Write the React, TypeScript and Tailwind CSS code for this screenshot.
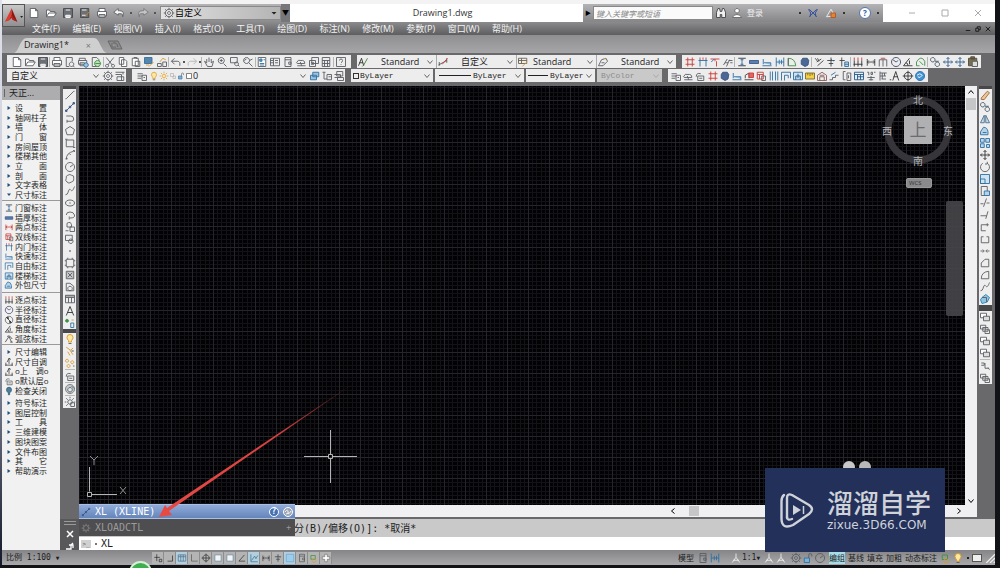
import React, { useState } from "react";

type Part = [string, string, string?];
const K = "#5a5d62";
const B = "#2f6fa3";
const R = "#cc3b36";
const Y = "#d99a2b";
const G = "#3f9142";

const icons: Record<string, Part[]> = {
  new: [[K, "M3 2h7l3 3v9H3zM10 2v3h3", "#fff"]],
  open: [[K, "M2 13V4h4l1 2h6v2M2 13l3-5h10l-3 5z", "#fff"]],
  save: [["#44474c", "M2 2h12v12H2z", "#6c6f74"], ["#fff", "M5 4h6M5 11h6v3H5z", "#ddd"]],
  saveas: [["#44474c", "M2 2h11v12H2z", "#6c6f74"], ["#fff", "M4 4h6M4 11h5"], ["#d97f2b", "M14 6l-6 7", "none"]],
  print: [[K, "M4 6V2h8v4M2 6h12v6H2zM4 10h8v4H4z", "#fff"]],
  preview: [[K, "M3 2h8v5M3 2v12h4M10 8a3 3 0 1 0 .1 0M12 13l2 2"]],
  publish: [[K, "M3 6V3h8v3M2 6h11v5H2zM4 9h6v4H4z"], [B, "M12 9a3 3 0 1 0 .1 0", "#9cc7e0"]],
  globe: [[K, "M3 2h6l3 3v9H3z"], [G, "M10 6a4 4 0 1 0 .1 0M7 10h7", "#bfe0b8"]],
  cut: [[K, "M3 2l8 10M13 2L5 12M4 11a2 2 0 1 0 .1 0M12 11a2 2 0 1 0 .1 0"]],
  copy: [[K, "M3 2h6v9H3zM6 5h5l2 2v7H6z", "#fff"]],
  paste: [[K, "M3 3h8v10H3zM5 2h4v2M7 7h6v7H7z", "#fff"]],
  match: [[B, "M2 2h10v8H2z", "#5b84ab"], [Y, "M14 8l-6 6M4 12h4", "none"]],
  block: [[K, "M2 10h5v4H2zM9 8h5v6H9z"], [Y, "M5 8l4-5 4 2", "none"]],
  undo: [["#55585e", "M6 3L2 7l4 4M2 7h8q4 0 3 6"]],
  redo: [["#b5b6b8", "M10 3l4 4-4 4M14 7H6q-4 0-3 6"]],
  undow: [["#5f6165", "M7 2L1 7l6 4V9h4q2 0 2 4 3-8-4-8H7z", "#f4f4f4"]],
  redow: [["#77797c", "M9 2l6 5-6 4V9H5q-2 0-2 4-3-8 4-8h2z", "#c4c4c6"]],
  pan: [[K, "M5 9V4M8 8V2M11 9V4M5 9L2 7l4 7h6l2-7-3 2"]],
  zoom: [[K, "M7 2a4 4 0 1 0 .1 0M10 10l4 4M5 6h4M7 4v4"]],
  zoomw: [[K, "M2 2h9v7H2zM10 8a2.500 2.500 0 1 0 .1 0M12 12l2 2"]],
  zoomp: [[K, "M6 2a4 4 0 1 0 .1 0M9 9l5 5M3 6l3-2M14 4l-4 2"]],
  props: [[K, "M3 2h10v12H3z", "#fff"], [B, "M5 4h3v3H5zM10 5h2M5 10h6M5 12h6", "#6da0c8"]],
  palette: [[K, "M2 3h12v10H2zM6 3v10M8 6h4M8 9h4M2 6h4M2 9h4"]],
  sheet: [[K, "M4 2h8v12H4zM4 5h8M9 8h3v3H9z"]],
  markup: [[K, "M2 9q2-5 6-3 5-1 5 4H3zM3 13h11M7 8l2 5"]],
  sheets: [[K, "M5 2h9v8H5zM2 6h8v8H2zM4 9h4M4 11h4"]],
  calc: [[K, "M3 2h10v12H3zM3 6h10M6 6v8M10 6v8M3 10h10"]],
  help: [[K, "M2 2h12v12H2zM6 6q0-2 2-2t2 2-2 3M8 11v1"]],
  gear: [[K, "M8 3a5 5 0 1 0 .1 0M8 6a2 2 0 1 0 .1 0M8 1v2M8 13v2M1 8h2M13 8h2M3 3l2 2M11 11l2 2M13 3l-2 2M3 13l2-2"]],
  wsave: [[K, "M2 3h12M2 6h8v8M4 9h9v5H4zM12 3v3"]],
  layers: [[K, "M2 5h7M2 8h7M2 11h5M8 7h6v7H8zM10 10h2"]],
  bulb: [[Y, "M8 2q4 0 4 4 0 2-2 4v2H6v-2Q4 8 4 6q0-4 4-4z", "#ffe9a0"], [K, "M6 14h4"]],
  sun: [[Y, "M8 5a3 3 0 1 0 .1 0M8 1v2M8 13v2M1 8h2M13 8h2M3 3l2 2M11 11l2 2M13 3l-2 2M3 13l2-2", "#ffeab0"]],
  sung: [[K, "M8 5a3 3 0 1 0 .1 0M8 1v2M1 8h2M13 8h2M3 3l2 2M13 3l-2 2M3 13l2-2M9 9h5v5H9z", "#eee"]],
  sphere: [["#777", "M8 2a6 6 0 1 0 .1 0", "#c9c9c9"], ["#4d6673", "M8 6a3 3 0 1 0 .1 0M10 4l3 3", "#e9e9e9"]],
  vp: [["#a7a7a7", "M3 3h6v6H3zM8 8h5v5H8z"]],
  lock: [[B, "M3 8h7v6H3z", "#7fb0d6"], [K, "M9 8V4q0-2 2-2t2 2v2", "none"]],
  box: [["#333", "M3 3h10v10H3z", "#fff"]],
  lay1: [[B, "M5 3h8v6H5zM2 7h8v6H2z", "#9fc4de"]],
  lay2: [[K, "M2 3h4M4 3v9h4M8 6h6v7H8zM10 9h3"]],
  lay3: [[K, "M5 2h8v6H5zM2 6h8v4H2M6 10h8v4H6z"]],
  textA: [["#333", "M2 13L6 3l3 10M3 9h5"], ["#4a7a3a", "M14 3l-5 9-2 2", "none"]],
  dim: [["#555", "M2 12L13 6M3 8v5M13 3v6"], [R, "M7 11l7-8", "none"]],
  tstyle: [["#6b6250", "M2 3h11v7H2zM2 6h11M6 3v7", "#eee"], [Y, "M13 8l-6 6", "none"]],
  leader: [[K, "M2 13l4-8 6-2 2 4-6 6zM6 9h4"], [Y, "M9 3l3 1", "none"]],
  grid: [[R, "M5 2v12M11 2v12M2 5h12M2 11h12"]],
  gridb: [[B, "M4 4v10M12 4v10M2 6h12"], [R, "M4 2v2M12 2v2M8 2v3"]],
  gridr: [[R, "M2 4h12M8 4v3M10 7v7"], [B, "M3 8l4-4"]],
  branch: [[K, "M2 12l5-8M6 14l4-9M9 6h5M11 9h3M4 9h4"]],
  ibeam: [["#333", "M3 3h10M3 13h10"], [B, "M8 4v8M6 5h4M6 11h4", "#2f6fa3"]],
  wall: [["#3a588a", "M2 6h12v4H2z", "#5b7fb0"]],
  stair: [[B, "M2 13h12M3 11V4M4 9h9v3", "#a7c8de"]],
  winh: [[B, "M3 2v12M13 2v12M3 8h10M7 5v6M10 5v6"]],
  door: [[G, "M3 13V3q9 0 10 10z", "none"], [K, "M3 3v10"]],
  blob: [["#36527e", "M5 3h6l2 3-1 6-4 2-5-3V6z", "#4a6796"]],
  pen: [["#444", "M3 3l3 4M6 3l2 4M5 8l6-4M6 13l8-7"]],
  cross: [["#444", "M8 2v12M3 6h10M5 10h6"], [B, "M8 4l3 3"]],
  crossb: [["#444", "M5 2v12M2 6h7"], [B, "M9 8h5v6H9zM9 11h5", "#c3d8e8"]],
  d3: [[R, "M3 2v4M8 2v4M13 2v4"], ["#333", "M3 6v8M8 6v8M13 6v8M2 11h12"]],
  d2: [["#444", "M3 4v9M13 4v9M3 8h10M5 6l-2 2 2 2M11 6l2 2-2 2"]],
  d2r: [[R, "M3 4v9M13 4v9M3 8h10M5 6l-2 2 2 2M11 6l2 2-2 2"]],
  dd: [[K, "M3 5v9M8 5v9M13 5v9M3 5h10"], [R, "M5 3h6"]],
  clock: [["#446", "M8 2a6 6 0 1 0 .1 0M8 8L4 5"], [B, "M8 8l3-2"]],
  diam: [[K, "M8 2a6 6 0 1 0 .1 0M4 4l8 8"], ["#333", "M4 4h3v3zM12 12H9V9z", "#333"]],
  angle: [["#333", "M2 13h12M2 13L10 3M8 13q0-4-3-4M10 6v5"]],
  arc: [["#333", "M2 13l6-9 4 9M10 13h4"], ["#333", "M5 4q4-3 8 4"]],
  green: [[G, "M2 13V8q6-10 11-1v6M6 7l5 5M2 13h4"]],
  copyo: [["#456", "M5 2a3 3 0 1 0 .1 0M8 7h5M11 8a3 3 0 1 0 .1 0"]],
  move: [["#355d8c", "M8 2v12M2 8h12M6 4l2-2 2 2M6 12l2 2 2-2M4 6L2 8l2 2M12 6l2 2-2 2"]],
  movek: [["#333", "M8 2v12M2 8h12M6 4l2-2 2 2M6 12l2 2 2-2M4 6L2 8l2 2M12 6l2 2-2 2"]],
  pasted: [["#554b38", "M2 3h11v10H2zM5 1h5v3H5z", "#777055"], ["#555", "M7 7h7v7H7z", "#ddd"]],
  red1: [["#444", "M2 13h12M3 11V7l5-3v7"], [R, "M8 4h6v6H8z", "#d66"]],
  red2: [[R, "M3 3h8v9H3zM3 6h8M6 6v6"], [K, "M9 8h5v6H9z"]],
  cols: [[B, "M3 2v12M6 2v12M10 2v12M13 2v12"]],
  arch: [[B, "M2 14V3h12v8M6 14V7h5v4"]],
  win: [[B, "M2 3h12v10H2z", "#cfe3f0"], ["#245a8c", "M5 13V8h6v5M8 5v6"]],
  ruler: [["#7a6a20", "M2 4h12v8H2zM5 4v3M8 4v4M11 4v3", "#f2cf46"]],
  house: [["#8a5c55", "M2 14V7l6-4 6 4v7zM5 14v-5h6v5M5 7h6"]],
  steps: [[K, "M2 13h4v-3h4V7h4"], [B, "M4 7l6-4"]],
  tsteps: [["#333", "M2 13h12M3 9v5M13 9v5M8 2v9M5 8l3-6 3 2"]],
  brace: [[K, "M6 2H3v11h3M8 4h5v10H8zM10 7v4"]],
  table: [["#245a8c", "M2 3h12v10H2zM2 6h12M6 6v7M10 6v7M6 9h8"]],
  tableg: [[K, "M2 3h12v10H2zM2 4h12M2 6h12M6 6v7M10 6v7"]],
  num: [[K, "M3 3h2v4M8 3h2v3H8zM12 3h2M3 10h10M5 13h6M8 8v6"]],
  tree: [[K, "M4 2v12M4 4h9M4 8h8M7 4v8M10 4v4M6 12h6"]],
  alpha: [["#333", "M5 14l4-12 4 12M6 9h6M1 13h2"]],
  target: [["#333", "M8 3a5 5 0 1 0 .1 0M8 1v14M1 8h14"]],
  swirl: [["#2b6fb4", "M8 2a6 6 0 1 0 .1 0", "#3f93d0"], ["#fff", "M4 7q4-4 7 0-3 5-6 2"]],
  line: [[K, "M3 13L13 3"], [K, "M2 13h1M13 3h1"]],
  xline: [["#35507c", "M3 13L13 3M2 12h2v2H2zM7 7h2v2H7zM12 2h2v2h-2z"]],
  pline: [[K, "M3 4h6q4 0 4 4 0 3-3 3H4M4 9v4"]],
  poly: [[K, "M8 2l6 4-2 7H4L2 6z"]],
  rect: [[K, "M3 4h10v9H3zM1.500 3h3M12 14h3"]],
  arcd: [[K, "M3 14Q3 5 13 3M2 13h3M7 6l2 2M12 2h2v2"]],
  circle: [[K, "M8 2a6 6 0 1 0 .1 0M8 8l4-3"]],
  cloud: [[K, "M5 3q3-2 5 0 4 0 3 4 1 4-3 5-4 3-6 0-3-2-1-5-1-3 2-4z"]],
  spline: [[K, "M2 13c4 0 3-5 5-7s3 7 7-4"]],
  ellipse: [[K, "M8 4c4 0 6 2 6 4s-2 4-6 4-6-2-6-4 2-4 6-4M7 8h2"]],
  earc: [[K, "M3 8q0-4 5-4t6 4-6 4M7 10v4"]],
  insert: [[K, "M4 3q5-3 6 2v3H4zM8 8h6v6H8zM2 13h4"]],
  mkblock: [[K, "M2 3h9v7H2zM9 8a3 3 0 1 0 .1 0"]],
  point: [[K, "M8 7v2M7 8h2"]],
  hatch: [[K, "M3 3h10v10H3zM1 5h2M1 11h2M13 5h2M13 11h2M5 1v2M11 1v2M5 13v2M11 13v2"]],
  grad: [[K, "M3 3h10v10H3z", "#c8c8c8"], [K, "M5 5l6 6M11 5l-6 6"]],
  region: [[K, "M3 3h5l5 4v6H3zM8 7a3 3 0 1 0 .1 0"]],
  mtext: [["#333", "M3 14L8 2l5 12M5 10h6"]],
  addsel: [[B, "M9 8h4v6H9z"], [G, "M4 3a2 2 0 1 0 .1 0", G], [Y, "M10 4h3"]],
  broom: [[Y, "M3 3l6 4 3-3M8 7l4 6M5 9l3 5"], ["#345", "M10 8h3"]],
  dots: [[Y, "M4 3a2 2 0 1 0 .1 0M11 5a2 2 0 1 0 .1 0M6 10a2 2 0 1 0 .1 0"], [K, "M12 12h2"]],
  stamp: [[K, "M3 9q0-6 6-4M5 8h8v6H5zM7 11h4"]],
  erase: [["#a06a3c", "M3 12L11 3l3 2-7 9H3z", "#e8c79a"]],
  mirror: [["#4c6e8c", "M7 3v10H2zM9 3v10h5z", "#cfe0ec"]],
  offset: [[B, "M2 13V9l4-6q5 0 6 6v4zM5 10h5", "#b6d3e5"]],
  array: [[B, "M2 2h5v5H2zM9 2h5v5H9zM2 9h5v5H2zM10 10h4v4h-4z", "#bcd8ea"]],
  rotate: [[K, "M11 3a6 6 0 1 1-6 0M11 1v3h-3"]],
  scale: [[B, "M2 2h12v12H2zM2 8h6v6H2z", "#cfe3f0"]],
  stretch: [[K, "M3 2h8v12H3z"], [B, "M7 8h7v6H7z", "#b6d3e5"]],
  trim: [[K, "M2 9h4M10 8h4M6 13l4-11"]],
  extend: [[K, "M2 9h8M12 3l-3 10"]],
  brk: [[K, "M3 13V5h10M11 3v4M3 13h6"]],
  brk2: [[K, "M3 13V5h3M10 5h3v8H3"]],
  join: [[K, "M2 8h4M10 8h4M5 6l2 2-2 2M11 6L9 8l2 2"]],
  chamfer: [[K, "M3 13V8l5-5h5v10z"]],
  fillet: [[K, "M3 13q0-9 10-10v10z"]],
  explode: [["#2b83b4", "M4 6l5-4 5 4-3 6-7 2-2-5z", "#8fc5e2"], [K, "M4 6h6v6"]],
  order: [[K, "M2 3h8v6H2z", "#fff"], [K, "M6 7h8v6H6z", "#ddd"]],
  order2: [[K, "M2 3h7v5H2zM5 6h7v5H5zM8 9h6v5H8z", "#eee"]],
  node: [[K, "M3 4h4v3H3M8 4v7h5M12 10l2 3"]],
  binoc: [["#444", "M2 7l2-5h2l1 4h2l1-4h2l2 5v7H9v-4H7v4H2z", "#f0f0f0"]],
  user: [["#666", "M8 2a3 3 0 1 0 .1 0M2 14q1-4 6-4t6 4z", "#fff"]],
  exch: [["#2c4c9a", "M2 3q5 5 2 10M14 3q-5 5-2 10M3 3l10 10M3 13L13 3", "none"]],
  a360: [["#eee", "M2 13L8 3l5 9z"], ["#b4531f", "M8 8h6v6H8z", "#e08438"]],
  plus: [["#777", "M6 2h4v4h4v4h-4v4H6v-4H2V6h4z", "#fff"]],
  man: [["#eee", "M8 2v5M8 7l-5 7M8 7l5 7M4 11h8"]],
  snapgrid: [["#4e7088", "M2 3h12v10H2zM2 6h12M6 3v10M10 3v10", "#b9d3e2"]],
  ortho: [[K, "M4 2v11h10"]],
  plain: [["#6d8ca0", "M3 3h10v10H3z", "#f2f6f8"]],
  snap: [["#333", "M6 2v11M2 7h9M10 10h4v4h-4z"]],
  corner: [["#333", "M12 4v9H4"]],
  ang: [["#333", "M12 3L3 13h10"]],
  graph: [["#3a7892", "M3 2v12h11M4 12l5-7 2 4 3-5"]],
  lightbox: [["#6ba8cd", "M2 2h12v12H2z", "#9dcdea"]],
  chart: [[G, "M3 4h7v6H3z"], [Y, "M8 9a3 3 0 1 0 .1 0"]],
  drop: [["#2f566e", "M8 2q4 0 4 4 0 3-3 5v3H7v-3Q4 9 4 6q0-4 4-4z", "#4c7f9b"]],
};

function Icon({ name, className = "size-3" }: { name: string; className?: string }) {
  return (
    <svg viewBox="0 0 16 16" className={`shrink-0 ${className}`} aria-hidden="true">
      {icons[name].map(([stroke, d, fill], i) => (
        <path key={i} d={d} stroke={stroke} fill={fill ?? "none"} strokeWidth={1.2} />
      ))}
    </svg>
  );
}

function Tool({ name, className = "size-3" }: { name: string; className?: string }) {
  return (
    <button type="button" aria-label={name} className="flex shrink-0 items-center justify-center">
      <Icon name={name} className={className} />
    </button>
  );
}

function Tools({ list, vertical = false }: { list: string; vertical?: boolean }) {
  return (
    <>
      {list.split(" ").map((n, i) =>
        n === "|" ? (
          <span key={i} className={vertical ? "h-px w-2.5 bg-[#b9b9b9]" : "h-2.5 w-px bg-[#b5b5b5]"} />
        ) : n === "v" ? (
          <span key={i} className="size-0.5 bg-[#555]" />
        ) : (
          <Tool key={i} name={n} />
        ),
      )}
    </>
  );
}

function Chevron({ className = "text-[#666]" }: { className?: string }) {
  return (
    <svg viewBox="0 0 8 8" className={`size-2 ${className}`} aria-hidden="true">
      <path d="M1.500 2.500L4 5.500 6.500 2.500" fill="none" stroke="currentColor" />
    </svg>
  );
}

function Combo({ label, value, className = "text-[9px]", disabled = false, solid = false }: { label: string; value: string; className?: string; disabled?: boolean; solid?: boolean }) {
  return (
    <div className="grid h-full min-w-0 flex-1 items-center">
      <select
        aria-label={label}
        disabled={disabled}
        className={`col-start-1 row-start-1 h-3 w-full appearance-none bg-transparent leading-3 outline-none ${className}`}
      >
        <option>{value}</option>
      </select>
      <span className="pointer-events-none col-start-1 row-start-1 mr-0.5 justify-self-end">
        {solid ? (
          <svg viewBox="0 0 8 8" className="size-2" aria-hidden="true"><path d="M1.500 3h5L4 5.500z" fill="#222" /></svg>
        ) : (
          <Chevron className={disabled ? "text-[#aaa]" : "text-[#666]"} />
        )}
      </span>
    </div>
  );
}

const menus = ["文件(F)", "编辑(E)", "视图(V)", "插入(I)", "格式(O)", "工具(T)", "绘图(D)", "标注(N)", "修改(M)", "参数(P)", "窗口(W)", "帮助(H)"];

const groups: { box: string; rows: [string, string][] }[] = [
  {
    box: "h-[98px] border-b",
    rows: [["▸", "设　　置"], ["▸", "轴网柱子"], ["▸", "墙　　体"], ["▸", "门　　窗"], ["▸", "房间屋顶"], ["▸", "楼梯其他"], ["▸", "立　　面"], ["▸", "剖　　面"], ["▸", "文字表格"], ["▾", "尺寸标注"]],
  },
  {
    box: "h-[90px] border-b pb-0.5",
    rows: [["ibeam", "门窗标注"], ["wall", "墙厚标注"], ["d2r", "两点标注"], ["red2", "双线标注"], ["gridb", "内门标注"], ["stair", "快速标注"], ["arch", "自由标注"], ["win", "楼梯标注"], ["offset", "外包尺寸"]],
  },
  {
    box: "h-[50px] border-b",
    rows: [["d3", "逐点标注"], ["clock", "半径标注"], ["diam", "直径标注"], ["angle", "角度标注"], ["arc", "弧弦标注"]],
  },
  {
    box: "h-[49px]",
    rows: [["▸", "尺寸编辑"], ["tsteps", "尺寸自调"], ["tsteps", "o上　调o"], ["stamp", "o默认层o"], ["drop", "检查关闭"]],
  },
  {
    box: "h-[78px]",
    rows: [["▸", "符号标注"], ["▸", "图层控制"], ["▸", "工　　具"], ["▸", "三维建模"], ["▸", "图块图案"], ["▸", "文件布图"], ["▸", "其　　它"], ["▸", "帮助演示"]],
  },
];

const barStyle = "flex h-full items-center bg-[#ededee]";

function TitleBar() {
  return (
    <header className="flex h-[18px] shrink-0 bg-white">
      <div className="flex w-72 shrink-0 items-center bg-linear-to-b from-[#b4b4b6] to-[#8c8c8e] pl-[26px] text-[9px]">
        <div className="flex w-[128px] items-center justify-between">
          <Tools list="new open save saveas print undow v redow v" />
        </div>
        <div className="ml-1 flex h-3.5 w-[121px] items-center border border-[#8a8a8a] bg-linear-to-r from-[#e2e2e2] to-[#b4b4b5] pl-0.5">
          <Icon name="gear" />
          <Combo label="工作空间" value="自定义" solid />
        </div>
        <button type="button" aria-label="自定义快速访问工具栏" className="flex h-full flex-1 items-center justify-center bg-[#77777a] text-[7px] text-black">▼</button>
      </div>
      <h1 className="flex flex-1 items-center justify-center pl-3 text-[9px] text-[#333]">Drawing1.dwg</h1>
      <div className="flex w-[300px] shrink-0 items-center bg-linear-to-b from-[#b4b4b6] to-[#868688]">
        <button type="button" aria-label="展开搜索" className="w-2.5 text-center text-[6px] text-black">▶</button>
        <input
          aria-label="搜索"
          placeholder="键入关键字或短语"
          className="h-3.5 w-[120px] border border-[#888] bg-[#fafafa] px-0.5 text-[8px] italic outline-none placeholder:text-[#888]"
        />
        <div className="flex flex-1 items-center gap-1 pl-0.5 text-[8px] text-[#f0f0f0]">
          <Tool name="binoc" />
          <Tool name="user" />
          <a href="#login">登录</a>
        </div>
        <div className="flex w-[84px] items-center justify-between pr-1 text-[#333]">
          <span className="size-0.5 bg-[#333]" />
          <Tool name="exch" />
          <Tool name="a360" />
          <span className="size-0.5 bg-[#333]" />
          <button type="button" aria-label="帮助" className="ml-2 flex size-3 items-center justify-center rounded-full border border-[#4f76b0] bg-white text-[8px] font-bold leading-none text-[#2e5fa8]">?</button>
          <span className="size-0.5 bg-[#333]" />
        </div>
      </div>
      <div className="flex w-28 shrink-0 items-center justify-around pl-3 text-[#aaa]">
        {[["最小化", "M1 4h6"], ["最大化", "M1 1h6v6H1z"], ["关闭", "M1 1l6 6M7 1L1 7"]].map(([l, d]) => (
          <button key={l} type="button" aria-label={l}>
            <svg viewBox="0 0 8 8" className="size-2"><path d={d} fill="none" stroke="currentColor" /></svg>
          </button>
        ))}
      </div>
    </header>
  );
}

function Toolbars() {
  return (
    <div className="flex h-[33px] shrink-0 flex-col gap-px bg-[#69696b] pt-0.5 pb-1 pl-[5px]">
      <div className="flex h-[13px] shrink-0 gap-1.5">
        <div className={`${barStyle} w-[344px] justify-between px-1`}>
          <Tools list="new open save | print preview publish globe | cut copy paste match block | undo v redo v | pan zoom zoomw zoomp | props palette sheet markup sheets calc | help" />
        </div>
        <div className={`${barStyle} w-[319px]`}>
          {[
            ["textA", "文字样式", "Standard", "pl-3"],
            ["dim", "标注样式", "自定义", "pl-3"],
            ["tstyle", "表格样式", "Standard", "pl-1"],
            ["leader", "多重引线样式", "Standard", "pl-3"],
          ].map(([i, l, v, pad]) => (
            <div key={l} className="flex h-full flex-1 items-center border-r border-[#aaa] last:border-r-0">
              <Tool name={i} />
              <Combo label={l} value={v} className={`text-[9px] text-[#222] ${pad}`} />
            </div>
          ))}
        </div>
        <div className={`${barStyle} w-[299px] justify-between px-0.5`}>
          <Tools list="grid gridb gridr branch | ibeam wall stair winh door blob | pen cross crossb | d3 d2 dd clock angle green | copyo move move pasted" />
        </div>
      </div>
      <div className="flex h-[13px] shrink-0 gap-1.5">
        <div className={`${barStyle} w-[119px]`}>
          <Combo label="工作空间列表" value="自定义" className="pl-1 text-[9px] text-[#222]" />
          <Tool name="gear" />
          <Tool name="wsave" />
        </div>
        <div className={`${barStyle} w-[213px]`}>
          <span className="w-1" />
          <Tool name="layers" />
          <span className="w-px" />
          <div className="flex"><Tool name="bulb" className="h-3 w-2.5" /><Tool name="sun" className="h-3 w-2.5" /><Tool name="vp" className="h-3 w-2" /><Tool name="lock" className="h-3 w-2" /><Tool name="box" className="h-3 w-2" /></div>
          <Combo label="图层" value="0" className="text-[9px] text-[#222]" />
          <Tools list="lay1 lay2 lay3" />
        </div>
        <div className="flex h-full w-[311px] gap-0.5 font-['Liberation_Mono',monospace]">
          <div className={`${barStyle} w-[82px] pl-0.5`}>
            <span className="size-1.5 shrink-0 border border-[#333]" />
            <Combo label="颜色" value="ByLayer" className="pl-px text-[8px] text-[#222]" />
          </div>
          <div className={`${barStyle} w-[89px] pl-1`}>
            <span className="h-px w-8 shrink-0 bg-[#222]" />
            <Combo label="线型" value="ByLayer" className="pl-0.5 text-[8px] text-[#222]" />
          </div>
          <div className={`${barStyle} w-[69px] pl-0.5`}>
            <span className="h-px w-5 shrink-0 bg-[#222]" />
            <Combo label="线宽" value="ByLayer" className="pl-0.5 text-[8px] text-[#222]" />
          </div>
          <div className="flex h-full flex-1 items-center bg-[#c9c9c9] pl-1">
            <Combo label="打印样式" value="ByColor" className="text-[8px] text-[#8d8d8d]" disabled />
          </div>
        </div>
        <div className={`${barStyle} w-[260px] justify-between px-0.5`}>
          <Tools list="layers markup stamp grid blob stair red1 red2 cols arch win ruler house steps brace table num tree alpha target swirl" />
        </div>
      </div>
    </div>
  );
}

function SidePanel() {
  return (
    <nav aria-label="天正" className="flex w-[58px] shrink-0 flex-col bg-[#f1f1f2] text-[8px] text-[#1c1e22]">
      <h2 className="flex h-3.5 shrink-0 items-center gap-1 bg-[#adadaf] pl-0.5 text-[9px]">
        <span className="h-2 w-px bg-[#666]" />天正...
      </h2>
      <div className="flex flex-col gap-0.5 pt-[3px]">
        {groups.map((g, gi) => (
          <ul key={gi} className={`flex flex-col border-[#9a9a9a] ${g.box}`}>
            {g.rows.map(([icon, text]) => (
              <li key={text} className="flex min-h-0 flex-1">
                <button type="button" className="flex items-center whitespace-nowrap leading-none">
                  <span className="flex w-[13px] justify-center">
                    {icon === "▸" || icon === "▾" ? (
                      <svg viewBox="0 0 6 6" className="size-1.5"><path d={icon === "▸" ? "M1.500 1L4.500 3 1.500 5z" : "M1 1.500h4L3 4z"} fill="#1f4f78" /></svg>
                    ) : (
                      <Icon name={icon} className="size-2.5" />
                    )}
                  </span>
                  {text}
                </button>
              </li>
            ))}
          </ul>
        ))}
      </div>
    </nav>
  );
}

function ViewCube() {
  return (
    <div className="absolute top-1 right-2 flex w-[76px] flex-col items-center">
      <svg viewBox="0 0 76 80" className="h-20 w-[76px] overflow-visible" aria-label="ViewCube">
        <circle cx="37" cy="40" r="30" fill="none" stroke="#36363a" strokeWidth="7" />
        <rect x="23" y="26" width="28" height="28" fill="#b0b0b2" />
        <text x="37" y="46" textAnchor="middle" fontSize="17" fill="#6b6b70">上</text>
        <text x="37" y="14" textAnchor="middle" fontSize="10" fill="#b5b5b8">北</text>
        <text x="37" y="75" textAnchor="middle" fontSize="10" fill="#b5b5b8">南</text>
        <text x="6" y="45" textAnchor="middle" fontSize="10" fill="#b5b5b8">西</text>
        <text x="67" y="45" textAnchor="middle" fontSize="10" fill="#b5b5b8">东</text>
      </svg>
      <button type="button" className="mt-2 h-2.5 w-[26px] rounded-xs border border-[#999] bg-[#8a8a8d] pl-0.5 text-left text-[6px] leading-none text-[#333]">WCS</button>
    </div>
  );
}

function Canvas() {
  return (
    <main className="relative min-w-0 flex-1 overflow-hidden bg-[#020204]">
      <svg className="absolute inset-0 size-full" aria-hidden="true">
        <defs>
          <pattern id="grid" x="8" y="14" width="21" height="21" patternUnits="userSpaceOnUse">
            <path d="M4.500 0v21M8.500 0v21M13.500 0v21M17.500 0v21M0 4.500h21M0 8.500h21M0 13.500h21M0 17.500h21" stroke="#131317" />
            <path d="M.5 0v21M0 .5h21" stroke="#25252b" />
          </pattern>
        </defs>
        <rect width="100%" height="100%" fill="url(#grid)" />
      </svg>
      <svg className="absolute bottom-[22px] left-[225px] size-[53px]" viewBox="0 0 53 53" aria-hidden="true">
        <path d="M26.500 0v24M26.500 29v24M0 26.500h24M29 26.500h24M24.500 24.500h4v4h-4z" fill="none" stroke="#b4b4b4" />
      </svg>
      <svg className="absolute bottom-2 left-[7px] h-[46px] w-12" viewBox="0 0 48 46" aria-hidden="true">
        <path d="M3.500 40.500V16M6 43.500h25M1.500 41.500h4v4h-4z" fill="none" stroke="#b4b4b4" />
        <path d="M4 5l4 4 4-4M8 9v5M34 36l6 7M40 36l-6 7" fill="none" stroke="#8e8e8e" />
      </svg>
      <ViewCube />
      <div className="absolute top-[115px] right-0.5 h-[115px] w-[17px] rounded-xs bg-[#47474a]/90" />
      <div className="absolute right-[94px] bottom-8 flex gap-1">
        <span className="size-3 rounded-full bg-[#c8c8c8]" />
        <span className="size-3 rounded-full bg-[#b8b8b8]" />
      </div>
    </main>
  );
}

function CommandLine() {
  const [value, setValue] = useState("XL");
  return (
    <section className="relative mt-0.5 flex h-[31px] shrink-0 font-['DejaVu_Sans_Mono','Noto_Sans_CJK_SC',monospace]">
      <div className="flex w-[19px] shrink-0 flex-col items-center justify-between bg-[#58585a] pt-0.5">
        <span className="h-1 w-3 border-y border-[#999]" />
        <button type="button" aria-label="关闭" className="flex"><svg viewBox="0 0 8 8" className="size-2"><path d="M1 1l6 6M7 1L1 7" stroke="#fff" strokeWidth="1.500" /></svg></button>
        <button type="button" aria-label="自定义" className="flex">
          <svg viewBox="0 0 8 8" className="size-2"><path d="M0 7h5V3L7 1M3 3h4v3" stroke="#fff" fill="none" strokeWidth="1.300" /></svg>
        </button>
      </div>
      <div className="flex flex-1 flex-col">
        <p className="flex h-[18px] items-center bg-[#c9c9ca] pl-[215px] text-[10px] whitespace-pre text-[#222]"><span>分(B)/偏移(O)]: *取消*</span></p>
        <label className="flex h-[13px] items-center gap-1 bg-white pl-0.5">
          <span className="flex h-2 w-2.5 items-center justify-center bg-[#d0d0d0] text-[6px] leading-none text-[#555]">&gt;_</span>
          <span className="size-0.5 bg-[#777]" />
          <input aria-label="命令" value={value} onChange={(e) => setValue(e.target.value)} className="h-full w-40 text-[10px] text-[#222] outline-none" />
        </label>
      </div>
      <div className="absolute bottom-[14px] left-[19px] flex h-8 w-[216px] flex-col text-[10px]">
        <button type="button" className="flex h-[15px] items-center gap-1 border-y border-[#a9c0e4] bg-linear-to-b from-[#8fabd8] to-[#6585ba] px-0.5 text-white">
          <Icon name="xline" className="size-2.5" />
          <span className="flex-1 text-left">XL (XLINE)</span>
          <span className="flex size-2.5 items-center justify-center rounded-full border border-white bg-[#4471b4] text-[8px] leading-none font-bold">?</span>
          <span className="flex size-2.5 items-center justify-center rounded-full border border-white bg-[#9aa5b3]"><svg viewBox="0 0 8 8" className="size-2"><path d="M1 4q3-4 3 0t3-1M2 6l3-1" stroke="#eef3fa" fill="none" /></svg></span>
        </button>
        <button type="button" className="flex h-[17px] items-center gap-1 bg-[#4e4e50] px-0.5 text-[#9b9b9b]">
          <svg viewBox="0 0 16 16" className="size-2.5"><path d="M8 4a4 4 0 1 0 .1 0M8 1v3M8 12v3M1 8h3M12 8h3M3 3l2 2M11 11l2 2M13 3l-2 2M3 13l2-2" stroke="#777" strokeWidth="2" fill="none" /></svg>
          <span className="flex-1 text-left">XLOADCTL</span>
          <span className="pr-0.5 text-[8px]">+</span>
        </button>
      </div>
    </section>
  );
}

function StatusBar() {
  return (
    <footer className="flex h-[15px] shrink-0 items-center bg-linear-to-b from-[#858587] to-[#a9a9ab] text-[8px] text-[#1d1d1d]">
      <button type="button" className="w-[150px] shrink-0 pl-1 text-left font-['DejaVu_Sans_Mono','Noto_Sans_CJK_SC',monospace]">比例 1:100 <span className="text-[6px]">▼</span></button>
      <div className="flex flex-1 items-center">
        {"snap corner snapgrid ortho target plain plain ang graph d2 cross lightbox sheet chart plus".split(" ").map((n, i) => (
          <button key={i} type="button" aria-label={n} className={`flex h-3 w-3 items-center justify-center border-r border-[#8d8d8d] ${i === 2 || i === 8 || i === 11 ? "bg-[#b3cfdf]" : "bg-[#b4b4b5]"}`}>
            <Icon name={n} className="size-2.5" />
          </button>
        ))}
      </div>
      <div className="flex shrink-0 items-center gap-[3px]">
        <button type="button">模型</button>
        <div className="flex"><Tool name="sheet" /><Tool name="winh" /></div>
        <div className="ml-1.5 flex items-center"><Tool name="man" /><button type="button" className="font-['DejaVu_Sans_Mono',monospace]">1:1<span className="text-[6px]">▼</span></button></div>
        <div className="flex"><Tool name="man" /><Tool name="man" /></div>
        <div className="flex"><Tool name="gear" /><Tool name="lock" /><Tool name="circle" /></div>
        <button type="button" className="bg-[#a7dce8]">编组</button>
        <button type="button">基线</button>
        <button type="button">填充</button>
        <button type="button">加粗</button>
        <button type="button">动态标注</button>
        <div className="flex"><Tool name="chart" /><Tool name="bulb" /></div>
        <span className="size-0.5 bg-[#222]" />
        <button type="button" aria-label="全屏显示" className="h-2 w-2.5 border border-[#555] bg-[#eee]" />
        <svg viewBox="0 0 8 8" className="size-2.5"><path d="M1 8l7-7M4 8l4-4M7 8l1-1" stroke="#eee" /></svg>
      </div>
    </footer>
  );
}

function Watermark() {
  return (
    <aside className="absolute right-[55px] bottom-4 flex h-21 w-[180px] items-center bg-[#22305a] pl-3.5 text-[#cfd2d9]">
      <svg viewBox="0 0 36 38" className="h-[38px] w-9 shrink-0" fill="none" stroke="#cfd2d9" strokeWidth="2.400" aria-hidden="true">
        <path d="M8 27V7q0-5 5-3l17 10q6 4 0 9L14 34Q3 39 2.500 28V10Q2.500 6 5 4" strokeLinejoin="round" strokeLinecap="round" />
        <path d="M8 26q0 4 5 2" strokeLinecap="round" />
        <path d="M14 14l8 5-8 5z" fill="#cfd2d9" stroke="none" />
        <path d="M24.500 15v8" strokeWidth="1.500" />
      </svg>
      <div className="flex flex-col pl-3 whitespace-nowrap">
        <strong className="text-[26px] leading-[30px] font-medium">溜溜自学</strong>
        <span className="font-['DejaVu_Sans',sans-serif] text-[12px] leading-[14px]">zixue.3D66.COM</span>
      </div>
    </aside>
  );
}

export default function App() {
  return (
    <div className="relative flex h-screen min-h-[560px] flex-col overflow-hidden bg-[#111317] pr-[5px] pb-[3px] font-['Open_Sans','Noto_Sans_CJK_SC',sans-serif]">
      <div className="flex min-h-0 flex-1">
        <div className="w-0.5 shrink-0 bg-linear-to-b from-[#dfe1ea] via-[#c3c6d4] to-[#141a2c]" />
        <div className="relative flex min-w-0 flex-1 flex-col bg-[#69696b]">
          <div className="h-1 shrink-0 bg-[#f3f3f4]" />
          <TitleBar />
          <button type="button" aria-label="应用程序菜单" className="absolute top-1 left-0 flex size-[23px] items-center justify-center border border-[#555] bg-linear-to-b from-[#c9c9ca] to-[#909092]">
            <svg viewBox="0 0 22 22" className="size-[22px]" aria-hidden="true">
              <path d="M9 3L2 17l4-1 3-7z" fill="#e0392e" />
              <path d="M9 3l6 14-5-2-1-6z" fill="#8c1712" />
              <path d="M6 16l3-3 1 2 5 2-4-4-2-4z" fill="#b8231c" />
              <path d="M18 11h3l-1.500 2z" fill="#222" />
            </svg>
          </button>
          <div className="flex h-[13px] shrink-0 items-center bg-linear-to-b from-[#8b8b8d] to-[#5e5e60] pr-1 pl-[30px] text-[9px] leading-none text-[#f4f4f4]">
            <nav className="flex w-[490px] justify-between">
              {menus.map((m) => (
                <button key={m} type="button" className="whitespace-nowrap">{m}</button>
              ))}
            </nav>
            <div className="ml-auto flex items-center gap-1 text-[#1e1e1e]">
              {[["最小化文档", "M1 6h6"], ["还原文档", "M1 3h4v4H1zM3 3V1h4v4H5"], ["关闭文档", "M1 1l6 6M7 1L1 7"]].map(([l, d]) => (
                <button key={l} type="button" aria-label={l}><svg viewBox="0 0 8 8" className="size-1.5"><path d={d} fill="none" stroke="currentColor" strokeWidth="1.300" /></svg></button>
              ))}
            </div>
          </div>
          <div className="flex h-[18px] shrink-0 items-end bg-linear-to-b from-[#8f8f91] to-[#a6a6a8] pl-3">
            <div className="grid h-4 w-[93px] items-center text-[9px] text-[#222]">
              <svg viewBox="0 0 93 16" preserveAspectRatio="none" className="col-start-1 row-start-1 size-full" aria-hidden="true">
                <path d="M0 16C5 15 6 1 13 1H80C86 1 87 15 93 16z" fill="#cfcfd0" />
              </svg>
              <div className="col-start-1 row-start-1 flex items-center justify-between pr-4 pl-2.5">
                <button type="button">Drawing1*</button>
                <button type="button" aria-label="关闭标签" className="leading-none text-[#777]">×</button>
              </div>
            </div>
            <button type="button" aria-label="新图形" className="flex">
              <svg viewBox="0 0 16 14" className="h-3.5 w-4"><path d="M1 2h10l4 8H5zM6 4q4-1 5 4M5 4v4h4" fill="#8b8b8d" stroke="#666" /></svg>
            </button>
          </div>
          <Toolbars />
          <div className="flex min-h-0 flex-1">
            <SidePanel />
            <div className="relative flex min-w-0 flex-1 flex-col">
              <div className="flex min-h-0 flex-1">
                <div className="flex w-[19px] shrink-0 flex-col items-center">
                  <div className="flex w-[13px] flex-col items-center bg-[#eeeeef]">
                    <span className="h-[3px] w-full bg-[#48484a]" />
                    <Tools vertical list="line xline pline poly rect arcd circle cloud spline ellipse earc insert mkblock point hatch grad region tableg mtext addsel" />
                    <span className="h-1 w-full bg-[#48484a]" />
                    <Tools vertical list="bulb broom dots | stamp | sphere | sung" />
                  </div>
                </div>
                <div className="flex min-w-0 flex-1 flex-col">
                  <div className="flex min-h-0 flex-1">
                    <Canvas />
                    <div className="flex w-3 shrink-0 flex-col items-center bg-[#f0eff1] text-black">
                      <span className="rotate-180 py-0.5"><Chevron className="text-black" /></span>
                      <span className="h-3 w-2.5 bg-[#c6c6c8]" />
                      <span className="mt-auto"><Chevron className="text-black" /></span>
                    </div>
                  </div>
                  <div className="flex h-3 shrink-0 items-center bg-[#f0eff1] pr-3.5 pl-[590px]">
                    <span className="rotate-90"><Chevron className="text-black" /></span>
                    <span className="ml-3 h-2.5 w-2.5 bg-[#c6c6c8]" />
                    <span className="ml-auto -rotate-90"><Chevron className="text-black" /></span>
                  </div>
                </div>
                <div className="flex w-[18px] shrink-0 flex-col items-center pr-0.5">
                  <div className="flex w-[13px] flex-col items-center bg-[#eeeeef]">
                    <span className="h-[3px] w-full bg-[#48484a]" />
                    <Tools vertical list="erase copyo mirror offset array movek rotate scale stretch trim extend brk brk2 join chamfer fillet spline explode" />
                    <span className="h-1.5 w-full bg-[#48484a]" />
                    <Tools vertical list="order order2 order order | node order2" />
                  </div>
                </div>
              </div>
              <CommandLine />
              <svg viewBox="0 0 200 138" className="pointer-events-none absolute bottom-[31px] left-[99px] h-[138px] w-[200px]" aria-hidden="true">
                <defs>
                  <linearGradient id="arrow" x1="1" y1="0" x2="0" y2="1">
                    <stop offset="0" stopColor="#d93a3a" stopOpacity="0.15" />
                    <stop offset="0.4" stopColor="#d94141" />
                    <stop offset="1" stopColor="#e84a45" />
                  </linearGradient>
                </defs>
                <path d="M198 0L8 127 6 124 0 136l13-2-3-4z" fill="url(#arrow)" />
              </svg>
            </div>
          </div>
          <StatusBar />
        </div>
      </div>
      <div className="absolute -bottom-4 left-[129px] size-[23px] rounded-full border-2 border-[#d8f0d8] bg-[#3fae4e]" />
      <Watermark />
    </div>
  );
}
